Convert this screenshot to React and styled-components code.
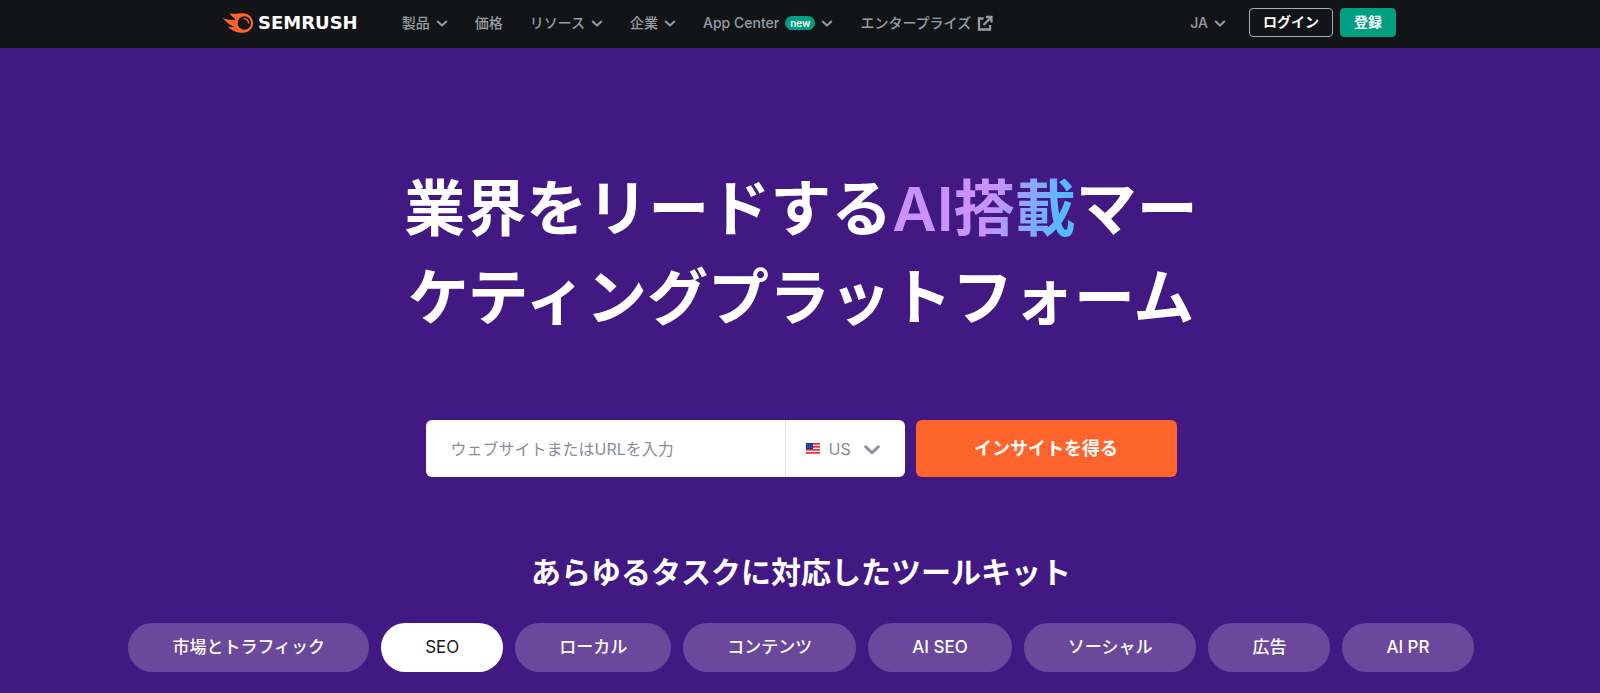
import React, { useState } from "react";
import styled, { createGlobalStyle } from "styled-components";

const GlobalStyle = createGlobalStyle`
  * {
    box-sizing: border-box;
  }
  body {
    background: #421983;
    font-family: "Inter", "Noto Sans CJK JP", sans-serif;
    margin: 0;
  }
  button, input, select {
    font-family: inherit;
  }
`;

const Header = styled.header`
  background: #121417;
  display: flex;
  justify-content: center;
`;

const HeaderInner = styled.div`
  align-items: center;
  display: flex;
  height: 48px;
  max-width: 1192px;
  padding: 0 0 3px 18px;
  width: 100%;
`;

const Logo = styled.a`
  align-items: center;
  color: #ffffff;
  display: flex;
  font-family: "DejaVu Sans", sans-serif;
  font-size: 18px;
  font-weight: bold;
  gap: 4px;
  line-height: 20px;
  margin-right: 44px;
  text-decoration: none;
`;

const Nav = styled.nav`
  align-items: center;
  display: flex;
  flex: 1;
  gap: 27px;
`;

const NavLink = styled.a`
  align-items: center;
  color: #989ca6;
  display: flex;
  font-size: 14px;
  font-weight: 500;
  gap: 6px;
  line-height: 20px;
  text-decoration: none;
  white-space: nowrap;
`;

const NavButton = styled(NavLink).attrs({ as: "button", type: "button" })`
  background: none;
  border: none;
  cursor: pointer;
  padding: 0;
`;

const Badge = styled.span`
  background: #009f81;
  border-radius: 7px;
  color: #ffffff;
  font-size: 10px;
  font-weight: 600;
  line-height: 14px;
  padding: 0 5px;
`;

const Account = styled.div`
  align-items: center;
  display: flex;
  gap: 7px;
`;

const Language = styled(NavButton)`
  margin-right: 16px;
`;

const AccountLink = styled.a`
  background: ${(props) => (props.$filled ? "#009f81" : "transparent")};
  border: 1px solid ${(props) => (props.$filled ? "#009f81" : "#a9abb6")};
  border-radius: 4px;
  color: #ffffff;
  font-size: 14px;
  font-weight: 600;
  line-height: 25px;
  padding: 0 13px 2px;
  text-decoration: none;
`;

const Hero = styled.main`
  align-items: center;
  display: flex;
  flex-direction: column;
  padding: 117px 16px 20px 18px;
`;

const Title = styled.h1`
  color: #ffffff;
  font-size: 61px;
  font-weight: 700;
  line-height: 89px;
  margin: 0 0 77px;
  max-width: 840px;
  text-align: center;
`;

const Gradient = styled.span`
  background: linear-gradient(100deg, #c893ff 52%, #58b8ff 90%);
  background-clip: text;
  color: transparent;
  font-weight: 600;
`;

const Form = styled.form`
  display: flex;
  gap: 11px;
  height: 57px;
  max-width: 751px;
  width: 100%;
`;

const Field = styled.div`
  background: #ffffff;
  border-radius: 6px;
  display: flex;
  flex: 1;
  overflow: hidden;
`;

const UrlInput = styled.input`
  background: transparent;
  border: none;
  border-right: 1px solid #e0e1e9;
  color: #191b23;
  flex: 1;
  font-size: 16px;
  min-width: 0;
  padding: 0 25px;
  &::placeholder {
    color: #898d9a;
    opacity: 1;
  }
`;

const Country = styled.label`
  align-items: center;
  color: #898d9a;
  display: flex;
  padding: 0 24px 0 20px;
`;

const CountrySelect = styled.select`
  appearance: none;
  background: transparent;
  border: none;
  color: #898d9a;
  font-size: 16px;
  margin: 0 11px 0 9px;
  padding: 0;
`;

const Submit = styled.button`
  background: #ff642d;
  border: none;
  border-radius: 6px;
  color: #ffffff;
  cursor: pointer;
  font-size: 18px;
  font-weight: 600;
  padding: 0 0 3px;
  width: 261px;
`;

const Subtitle = styled.h2`
  color: #ffffff;
  font-size: 30px;
  font-weight: 700;
  line-height: 40px;
  margin: 75px 0 31px;
  text-align: center;
`;

const Tabs = styled.div`
  display: flex;
  flex-wrap: wrap;
  gap: 12px;
  justify-content: center;
`;

const Tab = styled.button`
  background: ${(props) => (props.$active ? "#ffffff" : "#6b489c")};
  border: none;
  border-radius: 25px;
  color: ${(props) => (props.$active ? "#191b23" : "#ffffff")};
  cursor: pointer;
  font-size: 17px;
  font-weight: ${(props) => (props.$active ? 400 : 500)};
  line-height: 25px;
  padding: 12px 44px;
`;

const Chevron = ({ width = 12 }) => (
  <svg width={width} height={width} viewBox="0 0 12 12" fill="none" aria-hidden="true">
    <path
      d="M1.200 4 6 8.500 10.800 4"
      stroke="currentColor"
      strokeWidth="2"
      strokeLinejoin="round"
    />
  </svg>
);

const External = () => (
  <svg width="16" height="16" viewBox="0 0 16 16" fill="none" aria-hidden="true">
    <path
      d="M6.500 3.500H2V14.500H13V10M9 2H14.500V7.500M14 2.500 6.500 10"
      stroke="currentColor"
      strokeWidth="2.300"
    />
  </svg>
);

const Fireball = () => (
  <svg width="32" height="20" viewBox="0 0 31 20" aria-hidden="true">
    <path
      fill="#ff642d"
      d="M7 .600C12 1.300 16 .300 21 .300A9.700 9.700 0 0 1 21 19.700C14.500 19.700 9 17.500 5.200 13.400C7.700 14 9.700 14.300 12 14C8 12 3.500 9.500 .300 5C4.500 6.600 8.500 7.200 12 7.200C13 7.200 13.300 6.300 12 5.400C10 4 8.200 2.500 7 .600Z"
    />
    <circle cx="21.800" cy="10" r="6.700" fill="#121417" />
    <path
      d="M21.800 5.800A4.300 4.300 0 0 1 26 10"
      fill="none"
      stroke="#ff642d"
      strokeWidth="1.500"
      strokeLinecap="round"
    />
  </svg>
);

const Flag = () => (
  <svg width="14" height="11" viewBox="0 0 14 11" aria-hidden="true">
    <rect width="14" height="11" fill="#ffffff" />
    <path
      d="M0 .800H14M0 3.800H14M0 6.800H14M0 9.900H14"
      stroke="#f02c34"
      strokeWidth="1.700"
    />
    <rect width="7" height="6" fill="#1d2f8f" />
    <path d="M1 1.500H6M1 3H6M1 4.500H6" stroke="#7f8bd0" strokeWidth=".5" strokeDasharray="1 1" />
  </svg>
);

const navItems = [
  { label: "製品", menu: true },
  { label: "価格" },
  { label: "リソース", menu: true },
  { label: "企業", menu: true },
  { label: "App Center", menu: true, badge: "new" },
  { label: "エンタープライズ", external: true },
];

const toolkits = [
  "市場とトラフィック",
  "SEO",
  "ローカル",
  "コンテンツ",
  "AI SEO",
  "ソーシャル",
  "広告",
  "AI PR",
];

const App = () => {
  const [active, setActive] = useState("SEO");

  return (
    <>
      <GlobalStyle />
      <Header>
        <HeaderInner>
          <Logo href="#">
            <Fireball />
            SEMRUSH
          </Logo>
          <Nav>
            {navItems.map((item) =>
              item.menu ? (
                <NavButton key={item.label}>
                  {item.label}
                  {item.badge && <Badge>{item.badge}</Badge>}
                  <Chevron />
                </NavButton>
              ) : (
                <NavLink key={item.label} href="#">
                  {item.label}
                  {item.external && <External />}
                </NavLink>
              )
            )}
          </Nav>
          <Account>
            <Language>
              JA
              <Chevron />
            </Language>
            <AccountLink href="#">ログイン</AccountLink>
            <AccountLink href="#" $filled>
              登録
            </AccountLink>
          </Account>
        </HeaderInner>
      </Header>
      <Hero>
        <Title>
          業界をリードする<Gradient>AI搭載</Gradient>マー
          <br />
          ケティングプラットフォーム
        </Title>
        <Form onSubmit={(e) => e.preventDefault()}>
          <Field>
            <UrlInput
              type="text"
              aria-label="ウェブサイトまたはURL"
              placeholder="ウェブサイトまたはURLを入力"
            />
            <Country>
              <Flag />
              <CountrySelect aria-label="国">
                <option>US</option>
              </CountrySelect>
              <Chevron width={18} />
            </Country>
          </Field>
          <Submit type="submit">インサイトを得る</Submit>
        </Form>
        <Subtitle>あらゆるタスクに対応したツールキット</Subtitle>
        <Tabs role="tablist">
          {toolkits.map((name) => (
            <Tab
              key={name}
              type="button"
              role="tab"
              aria-selected={active === name}
              $active={active === name}
              onClick={() => setActive(name)}
            >
              {name}
            </Tab>
          ))}
        </Tabs>
      </Hero>
    </>
  );
};

export default App;
